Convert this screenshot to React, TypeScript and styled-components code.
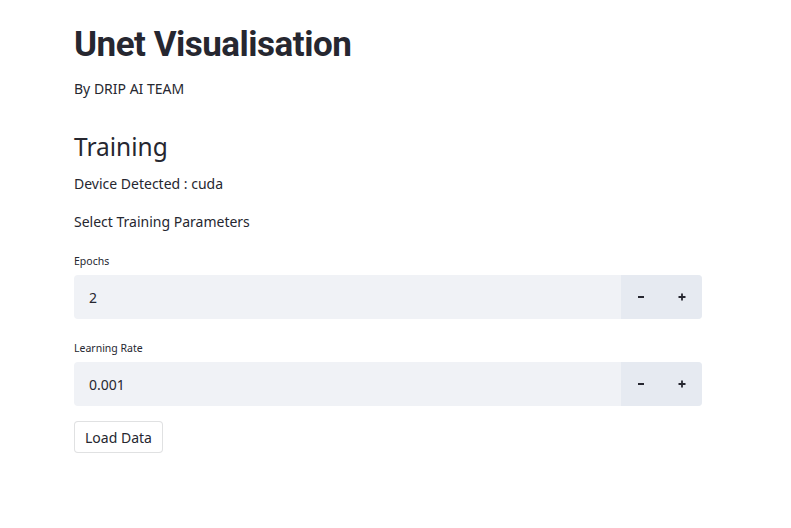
import React from "react";
import styled, { createGlobalStyle } from "styled-components";

const Global = createGlobalStyle`
  html, body { margin: 0; padding: 0; background: #ffffff; }
  body { font-family: "Noto Sans", "Open Sans", sans-serif; color: #262730; }
  * { box-sizing: border-box; }
`;

const Main = styled.main`
  display: flex;
  flex-direction: column;
  width: 628px;
  margin-left: 74px;
  padding-top: 24px;
`;

const Title = styled.h1`
  margin: 0;
  font-family: Roboto, "Noto Sans", sans-serif;
  font-size: 35px;
  line-height: 42px;
  font-weight: 700;
  letter-spacing: -0.5px;
  color: #262730;
`;

const Text = styled.p<{ $mt: number }>`
  margin: ${(p) => p.$mt}px 0 0;
  font-size: 14px;
  line-height: 21px;
  font-weight: 400;
  color: #262730;
`;

const Subheader = styled.h2`
  margin: 33px 0 0;
  font-size: 24.5px;
  line-height: 30px;
  font-weight: 400;
  color: #262730;
`;

const Label = styled.label`
  display: block;
  margin-top: 21px;
  font-size: 10.5px;
  line-height: 16px;
  color: #262730;
`;

const NumberField = styled.div`
  display: flex;
  height: 44px;
  margin-top: 6px;
  border-radius: 4px;
  overflow: hidden;
  background: #f0f2f6;
`;

const Value = styled.div`
  flex: 1;
  display: flex;
  align-items: center;
  padding-left: 15px;
  font-size: 14px;
  color: #262730;
`;

const Steps = styled.div`
  display: flex;
  width: 81px;
  background: #e6eaf1;
`;

const StepButton = styled.button`
  flex: 1;
  display: flex;
  align-items: center;
  justify-content: center;
  border: none;
  background: transparent;
  padding: 0;
  cursor: pointer;
`;

const Button = styled.button`
  align-self: flex-start;
  margin-top: 15px;
  height: 32px;
  padding: 0 10px;
  border: 1px solid rgba(49, 51, 63, 0.15);
  border-radius: 4px;
  background: #ffffff;
  font-family: "Noto Sans", "Open Sans", sans-serif;
  font-size: 14px;
  color: #262730;
`;

const Minus = () => (
  <svg width="8" height="8" viewBox="0 0 8 8">
    <path d="M1 4h6" stroke="#262730" strokeWidth="1.8" />
  </svg>
);

const Plus = () => (
  <svg width="8" height="8" viewBox="0 0 8 8">
    <path d="M0.5 4h7M4 0.5v7" stroke="#262730" strokeWidth="1.8" />
  </svg>
);

const NumberInput = ({ label, value }: { label: string; value: string }) => (
  <>
    <Label>{label}</Label>
    <NumberField>
      <Value>{value}</Value>
      <Steps>
        <StepButton aria-label="decrement">
          <Minus />
        </StepButton>
        <StepButton aria-label="increment">
          <Plus />
        </StepButton>
      </Steps>
    </NumberField>
  </>
);

export default function App() {
  return (
    <>
      <Global />
      <Main>
        <Title>Unet Visualisation</Title>
        <Text $mt={12}>By DRIP AI TEAM</Text>
        <Subheader>Training</Subheader>
        <Text $mt={11}>Device Detected : cuda</Text>
        <Text $mt={17}>Select Training Parameters</Text>
        <NumberInput label="Epochs" value="2" />
        <NumberInput label="Learning Rate" value="0.001" />
        <Button>Load Data</Button>
      </Main>
    </>
  );
}
